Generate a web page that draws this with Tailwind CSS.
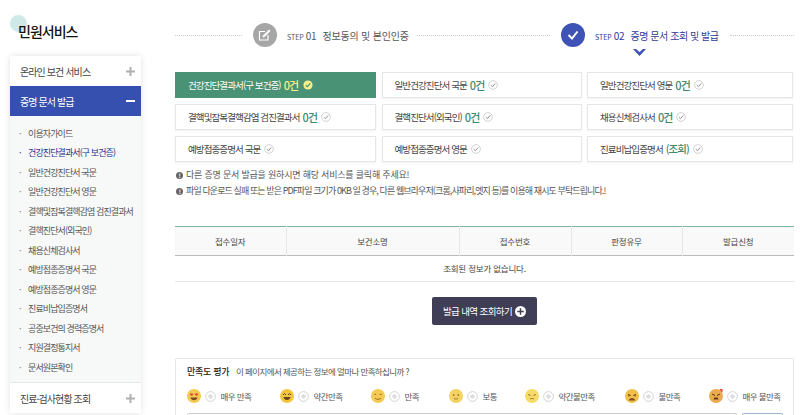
<!DOCTYPE html>
<html lang="ko">
<head>
  <meta charset="UTF-8">
  <title>민원서비스</title>
  <script src="https://cdn.jsdelivr.net/npm/@tailwindcss/browser@4"></script>
</head>
<body class="bg-white text-[#333] font-['Noto_Sans_CJK_KR','Noto_Sans',sans-serif] h-[415px] overflow-hidden">
<svg class="hidden">
  <symbol id="chk" viewBox="0 0 12 12">
    <circle cx="6" cy="6" r="5.2" fill="#fff" stroke="#bbb" stroke-width="0.8"/>
    <path d="M3.4 6.2 5.3 8 8.8 4" fill="none" stroke="#888" stroke-width="1.1"/>
  </symbol>
  <symbol id="radio" viewBox="0 0 12 12">
    <circle cx="6" cy="6" r="5.3" fill="#fff" stroke="#bbb" stroke-width="0.7"/>
    <circle cx="6" cy="6" r="2.4" fill="#ddd"/>
  </symbol>
  <symbol id="plus" viewBox="0 0 9 9">
    <path d="M4.500 0v9M0 4.500h9" stroke="#b0b0b0" stroke-width="2"/>
  </symbol>
</svg>
<div class="flex h-[415px] overflow-hidden pl-[10px]">

  <!-- Sidebar -->
  <aside class="w-[131px] shrink-0">
    <div class="relative h-[56px]">
      <div class="absolute left-0 top-[15px] w-[17px] h-[17px] rounded-full bg-[#cfe8e8]"></div>
      <h2 class="absolute left-[8px] top-[21px] text-[14px] leading-[20px] font-medium tracking-[-1px] text-[#111]">민원서비스</h2>
    </div>
    <div class="shadow-[0_0_6px_rgba(0,0,0,0.12)] text-[10px] tracking-[-0.9px]">
      <div class="h-[30px] flex items-center justify-between pl-[10px] pr-[6px] bg-white text-[#444]">
        <span>온라인 보건 서비스</span><svg width="9" height="9"><use href="#plus"/></svg>
      </div>
      <div class="h-[30px] flex items-center justify-between pl-[10px] pr-[6px] bg-[#3550ae] text-white">
        <span>증명 문서 발급</span><span class="w-[9px] h-[2px] bg-white"></span>
      </div>
      <ul class="bg-[#f7f8f8] pt-[7.5px] pb-[5px] border-b border-[#e6e6e6] text-[9px] text-[#555]">
        <li class="h-[19.5px] flex items-center pl-[18px] relative"><span class="absolute left-[9px] text-[#777]">·</span>이용자가이드</li>
        <li class="h-[19.5px] flex items-center pl-[18px] relative text-[#2d2f8a]"><span class="absolute left-[9px]">·</span>건강진단결과서(구 보건증)</li>
        <li class="h-[19.5px] flex items-center pl-[18px] relative"><span class="absolute left-[9px] text-[#777]">·</span>일반건강진단서 국문</li>
        <li class="h-[19.5px] flex items-center pl-[18px] relative"><span class="absolute left-[9px] text-[#777]">·</span>일반건강진단서 영문</li>
        <li class="h-[19.5px] flex items-center pl-[18px] relative whitespace-nowrap"><span class="absolute left-[9px] text-[#777]">·</span>결핵및잠복결핵감염 검진결과서</li>
        <li class="h-[19.5px] flex items-center pl-[18px] relative"><span class="absolute left-[9px] text-[#777]">·</span>결핵진단서(외국인)</li>
        <li class="h-[19.5px] flex items-center pl-[18px] relative"><span class="absolute left-[9px] text-[#777]">·</span>채용신체검사서</li>
        <li class="h-[19.5px] flex items-center pl-[18px] relative"><span class="absolute left-[9px] text-[#777]">·</span>예방접종증명서 국문</li>
        <li class="h-[19.5px] flex items-center pl-[18px] relative"><span class="absolute left-[9px] text-[#777]">·</span>예방접종증명서 영문</li>
        <li class="h-[19.5px] flex items-center pl-[18px] relative"><span class="absolute left-[9px] text-[#777]">·</span>진료비납입증명서</li>
        <li class="h-[19.5px] flex items-center pl-[18px] relative"><span class="absolute left-[9px] text-[#777]">·</span>공중보건의 경력증명서</li>
        <li class="h-[19.5px] flex items-center pl-[18px] relative"><span class="absolute left-[9px] text-[#777]">·</span>지원결정통지서</li>
        <li class="h-[19.5px] flex items-center pl-[18px] relative"><span class="absolute left-[9px] text-[#777]">·</span>문서원본확인</li>
      </ul>
      <div class="h-[30px] flex items-center justify-between pl-[10px] pr-[6px] bg-white text-[#444]">
        <span>진료·검사현황 조회</span><svg width="9" height="9"><use href="#plus"/></svg>
      </div>
    </div>
  </aside>

  <!-- Main -->
  <main class="w-[619px] ml-[34px] shrink-0">

    <!-- Steps -->
    <div class="flex items-center h-[24px] mt-[23px] text-[10px] tracking-[-0.2px]">
      <div class="w-[67px] border-t border-dotted border-[#ccc]"></div>
      <div class="ml-[11px] w-[24px] h-[24px] rounded-full bg-[#a6a6a6] flex items-center justify-center">
        <svg width="14" height="14" viewBox="0 0 14 14" fill="none" stroke="#fff" stroke-width="1.2"><path d="M10 7v5H1.500V3.500H7"/><path d="M4.500 9.500 5 7.500 11 1.500 12.500 3 6.500 9Z" fill="#fff" stroke="none"/></svg>
      </div>
      <div class="ml-[10px] w-[130px] flex items-baseline whitespace-nowrap text-[#555]">
        <span class="text-[7px] tracking-normal">STEP</span><span class="text-[10px] ml-[2px] mr-[6px]">01</span><span>정보동의 및 본인인증</span>
      </div>
      <div class="w-[133px] border-t border-dotted border-[#ccc]"></div>
      <div class="ml-[11px] w-[24px] h-[24px] rounded-full bg-[#3f52b5] flex items-center justify-center">
        <svg width="14" height="14" viewBox="0 0 14 14" fill="none" stroke="#fff" stroke-width="2"><path d="M2.500 7 6 10.500 11.500 3.500"/></svg>
      </div>
      <div class="relative ml-[10px] w-[135px] flex items-baseline whitespace-nowrap text-[#2f3c96]">
        <span class="text-[7px] tracking-normal">STEP</span><span class="text-[10px] ml-[2px] mr-[6px]">02</span><span class="tracking-[-0.45px]">증명 문서 조회 및 발급</span>
        <svg class="absolute left-[38px] top-[21px]" width="13" height="7" viewBox="0 0 13 7" fill="#3f52b5"><path d="M0 0h3l3.500 3L10 0h3L6.500 7Z"/></svg>
      </div>
      <div class="flex-1 border-t border-dotted border-[#ccc]"></div>
    </div>

    <!-- Document tabs -->
    <div class="grid grid-cols-[201px_200px_206px] gap-x-[5.5px] gap-y-[6px] mt-[25px] text-[9.5px] tracking-[-0.9px] text-[#444]">
      <div class="h-[26px] flex items-center pl-[13px] bg-[#4a9276] text-white whitespace-nowrap"><span>건강진단결과서(구 보건증)</span><span class="ml-[3px] mr-[5px] text-[11px] text-[#f5f08a] font-medium">0건</span>
        <svg width="10" height="10" viewBox="0 0 12 12"><circle cx="6" cy="6" r="5.500" fill="#f5f08a"/><path d="M3.300 6.200 5.300 8 8.800 4" fill="none" stroke="#4a9276" stroke-width="1.500"/></svg>
      </div>
      <div class="h-[26px] flex items-center gap-[3px] pl-[12px] border border-[#e6e6e6] shadow-[0_1px_2px_rgba(0,0,0,0.06)] whitespace-nowrap"><span>일반건강진단서 국문</span><span class="text-[11px] font-medium text-[#3f8a6e]">0건</span><svg class="ml-[1px]" width="10" height="10"><use href="#chk"/></svg></div>
      <div class="h-[26px] flex items-center gap-[3px] pl-[12px] border border-[#e6e6e6] shadow-[0_1px_2px_rgba(0,0,0,0.06)] whitespace-nowrap"><span>일반건강진단서 영문</span><span class="text-[11px] font-medium text-[#3f8a6e]">0건</span><svg class="ml-[1px]" width="10" height="10"><use href="#chk"/></svg></div>
      <div class="h-[26px] flex items-center gap-[3px] pl-[12px] border border-[#e6e6e6] shadow-[0_1px_2px_rgba(0,0,0,0.06)] whitespace-nowrap"><span>결핵및잠복결핵감염 검진결과서</span><span class="text-[11px] font-medium text-[#3f8a6e]">0건</span><svg class="ml-[1px]" width="10" height="10"><use href="#chk"/></svg></div>
      <div class="h-[26px] flex items-center gap-[3px] pl-[12px] border border-[#e6e6e6] shadow-[0_1px_2px_rgba(0,0,0,0.06)] whitespace-nowrap"><span>결핵진단서(외국인)</span><span class="text-[11px] font-medium text-[#3f8a6e]">0건</span><svg class="ml-[1px]" width="10" height="10"><use href="#chk"/></svg></div>
      <div class="h-[26px] flex items-center gap-[3px] pl-[12px] border border-[#e6e6e6] shadow-[0_1px_2px_rgba(0,0,0,0.06)] whitespace-nowrap"><span>채용신체검사서</span><span class="text-[11px] font-medium text-[#3f8a6e]">0건</span><svg class="ml-[1px]" width="10" height="10"><use href="#chk"/></svg></div>
      <div class="h-[26px] flex items-center gap-[4px] pl-[12px] border border-[#e6e6e6] shadow-[0_1px_2px_rgba(0,0,0,0.06)] whitespace-nowrap"><span>예방접종증명서 국문</span><svg width="10" height="10"><use href="#chk"/></svg></div>
      <div class="h-[26px] flex items-center gap-[4px] pl-[12px] border border-[#e6e6e6] shadow-[0_1px_2px_rgba(0,0,0,0.06)] whitespace-nowrap"><span>예방접종증명서 영문</span><svg width="10" height="10"><use href="#chk"/></svg></div>
      <div class="h-[26px] flex items-center gap-[3px] pl-[12px] border border-[#e6e6e6] shadow-[0_1px_2px_rgba(0,0,0,0.06)] whitespace-nowrap"><span>진료비납입증명서</span><span class="text-[10.500px] font-medium text-[#3f8a6e]">(조회)</span><svg class="ml-[1px]" width="10" height="10"><use href="#chk"/></svg></div>
    </div>

    <!-- Notes -->
    <div class="mt-[5px] text-[#555]">
      <p class="h-[16px] flex items-center gap-[3px] text-[9px] tracking-[-0.2px]"><span class="w-[7px] h-[7px] ml-[1px] rounded-full bg-[#666] text-white text-[6px] leading-[7px] text-center font-bold">!</span>다른 증명 문서 발급을 원하시면 해당 서비스를 클릭해 주세요!</p>
      <p class="h-[16px] flex items-center gap-[3px] whitespace-nowrap text-[9px] tracking-[-0.9px]"><span class="w-[7px] h-[7px] ml-[1px] rounded-full bg-[#666] text-white text-[6px] leading-[7px] text-center font-bold">!</span>파일 다운로드 실패 또는 받은 PDF파일 크기가 0KB 일 경우, 다른 웹브라우저(크롬,사파리,엣지 등)를 이용해 재시도 부탁드립니다.!</p>
    </div>

    <!-- Result table -->
    <table class="w-[619px] table-fixed mt-[27px] border-t border-[#7fb5a0] text-[8.500px] tracking-[-0.2px] text-[#444]">
      <thead>
        <tr class="h-[29px] bg-[#f9f9f9] border-b border-[#bbb]">
          <th class="w-[111px] font-normal border-r border-[#e6e6e6]">접수일자</th>
          <th class="w-[173px] font-normal border-r border-[#e6e6e6]">보건소명</th>
          <th class="w-[112px] font-normal border-r border-[#e6e6e6]">접수번호</th>
          <th class="w-[111px] font-normal border-r border-[#e6e6e6]">판정유무</th>
          <th class="font-normal">발급신청</th>
        </tr>
      </thead>
      <tbody>
        <tr class="h-[26px] border-b border-[#e6e6e6]"><td colspan="5" class="text-center">조회된 정보가 없습니다.</td></tr>
      </tbody>
    </table>

    <div class="flex justify-center mt-[15px]">
      <button class="w-[105px] h-[28px] rounded-[2px] bg-[#403e56] text-white text-[9.500px] tracking-[-0.6px] flex items-center justify-center gap-[3px]">발급 내역 조회하기
        <svg width="11" height="11" viewBox="0 0 12 12"><circle cx="6" cy="6" r="6" fill="#fff"/><path d="M6 2.500v7M2.500 6h7" stroke="#403e56" stroke-width="1.600"/></svg>
      </button>
    </div>

    <!-- Satisfaction -->
    <div class="mt-[33px] h-[57px] overflow-hidden border border-b-0 border-[#e6e6e6] rounded-t-[2px] pl-[11px] pr-[10px]">
      <div class="flex items-center h-[25px] text-[9px] tracking-[-0.3px]">
        <strong class="w-[49px] font-medium text-[#222]">만족도 평가</strong><span class="text-[8.500px] tracking-[-0.6px] text-[#555]">이 페이지에서 제공하는 정보에 얼마나 만족하십니까 ?</span>
      </div>
      <div class="flex items-center h-[24px] text-[8.500px] tracking-[-0.6px] text-[#555]">
        <label class="w-[93px] flex items-center gap-[4px]">
          <svg width="14" height="14" viewBox="0 0 14 14"><circle cx="7" cy="7" r="7" fill="#f4c94e"/><path d="M3 5.500C3 4 5 4 5.500 5 6 4 6.500 4 6 6L4.500 7Z" fill="#e0453a"/><path d="M11 5.500C11 4 9 4 8.500 5 8 4 7.500 4 8 6L9.500 7Z" fill="#e0453a"/><path d="M3.500 8.500h7C10 12 4 12 3.500 8.500Z" fill="#7a4a20"/></svg>
          <svg width="11" height="11"><use href="#radio"/></svg><span class="ml-[0.5px]">매우 만족</span></label>
        <label class="w-[91px] flex items-center gap-[4px]">
          <svg width="14" height="14" viewBox="0 0 14 14"><circle cx="7" cy="7" r="7" fill="#f2c53f"/><path d="M3 6 4.500 4.500 6 6M8 6 9.500 4.500 11 6" fill="none" stroke="#5a3b15" stroke-width="1"/><path d="M3.500 8h7C10 12 4 12 3.500 8Z" fill="#6b4218"/></svg>
          <svg width="11" height="11"><use href="#radio"/></svg><span class="ml-[0.5px]">약간만족</span></label>
        <label class="w-[78px] flex items-center gap-[4px]">
          <svg width="14" height="14" viewBox="0 0 14 14"><circle cx="7" cy="7" r="7" fill="#f4ca50"/><path d="M3 6c.6-1 1.800-1 2.400 0M8.600 6c.6-1 1.800-1 2.400 0M4 9c1.500 1.800 4.500 1.800 6 0" fill="none" stroke="#8a6420" stroke-width="0.900"/></svg>
          <svg width="11" height="11"><use href="#radio"/></svg><span class="ml-[0.5px]">만족</span></label>
        <label class="w-[76px] flex items-center gap-[4px]">
          <svg width="14" height="14" viewBox="0 0 14 14"><circle cx="7" cy="7" r="7" fill="#f5d362"/><circle cx="4.800" cy="6" r="0.800" fill="#6b4d18"/><circle cx="9.200" cy="6" r="0.800" fill="#6b4d18"/><path d="M5 9.500c1.200.6 2.800.6 4 0" fill="none" stroke="#8a6420" stroke-width="0.800"/></svg>
          <svg width="11" height="11"><use href="#radio"/></svg><span class="ml-[0.5px]">보통</span></label>
        <label class="w-[100px] flex items-center gap-[4px]">
          <svg width="14" height="14" viewBox="0 0 14 14"><circle cx="7" cy="7" r="7" fill="#f6dc66"/><path d="M3.200 5.500 5.500 6.500M10.800 5.500 8.500 6.500" stroke="#7a5a1c" stroke-width="0.900"/><path d="M5 10c1.200-.8 2.800-.8 4 0" fill="none" stroke="#8a6420" stroke-width="0.800"/></svg>
          <svg width="11" height="11"><use href="#radio"/></svg><span class="ml-[0.5px]">약간불만족</span></label>
        <label class="w-[84px] flex items-center gap-[4px]">
          <svg width="14" height="14" viewBox="0 0 14 14"><circle cx="7" cy="7" r="7" fill="#f0c04a"/><path d="M3 5 5.500 6.500 3 7M11 5 8.500 6.500 11 7" fill="none" stroke="#6b4218" stroke-width="0.900"/><path d="M4 11.500C4 8 10 8 10 11.500Z" fill="#7a4a20"/></svg>
          <svg width="11" height="11"><use href="#radio"/></svg><span class="ml-[0.5px]">불만족</span></label>
        <label class="flex items-center gap-[4px] whitespace-nowrap">
          <svg width="14" height="14" viewBox="0 0 14 14"><circle cx="7" cy="7" r="7" fill="#eda94e"/><path d="M10.500 0h3v3.500l-1.500-1z" fill="#e0453a"/><path d="M3 5 6 6.500M11 5 8 6.500" stroke="#5a3b15" stroke-width="1"/><path d="M4.500 10.500h5L8.500 8.500h-3Z" fill="#5a3b15"/></svg>
          <svg width="11" height="11"><use href="#radio"/></svg><span class="ml-[0.5px]">매우 불만족</span></label>
      </div>
      <div class="flex gap-[5px] mt-[5px]">
        <div class="w-[550px] h-[2px] border-t border-x border-[#ccc] rounded-t-[2px]"></div>
        <div class="w-[41px] h-[2px] border-t border-x border-[#9db4d0] rounded-t-[2px]"></div>
      </div>
    </div>
  </main>
</div>
</body>
</html>
